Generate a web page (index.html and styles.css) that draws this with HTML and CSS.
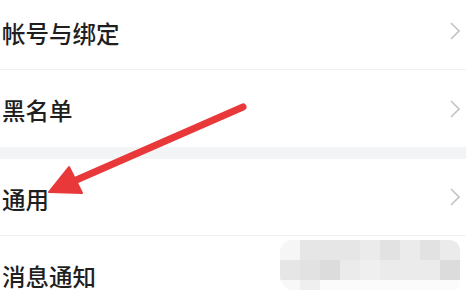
FILE: index.html
```html
<!DOCTYPE html>
<html lang="zh-CN">
<head>
    <meta charset="UTF-8">
    <meta name="viewport" content="width=device-width, initial-scale=1.0">
    <title>设置</title>
    <link rel="stylesheet" href="styles.css">
</head>
<body>
    <div class="settings">
        <div class="group">
            <div class="item item-first">
                <span class="label">帐号与绑定</span>
                <svg class="chevron" viewBox="0 0 10 18"><path d="M1 1 L9 9 L1 17"/></svg>
            </div>
            <div class="item">
                <span class="label">黑名单</span>
                <svg class="chevron" viewBox="0 0 10 18"><path d="M1 1 L9 9 L1 17"/></svg>
            </div>
        </div>
        <div class="gap"></div>
        <div class="group">
            <div class="item">
                <span class="label">通用</span>
                <svg class="chevron" viewBox="0 0 10 18"><path d="M1 1 L9 9 L1 17"/></svg>
            </div>
            <div class="item">
                <span class="label">消息通知</span>
                <svg class="chevron" viewBox="0 0 10 18"><path d="M1 1 L9 9 L1 17"/></svg>
            </div>
        </div>
    </div>

    <!-- red pointer drawn over the list -->
    <svg class="pointer" viewBox="0 0 466 302">
        <line x1="243" y1="107" x2="74" y2="181" />
        <polygon points="49,192 69,167 82,193" />
    </svg>

    <!-- pixelated patch -->
    <div class="mosaic">
        <div class="cell c1"></div><div class="cell c3"></div><div class="cell c3"></div><div class="cell c3"></div><div class="cell c5"></div><div class="cell c2"></div><div class="cell c5"></div><div class="cell c2"></div><div class="cell c5"></div>
        <div class="cell c3"></div><div class="cell c2"></div><div class="cell c4"></div><div class="cell c5"></div><div class="cell c6"></div><div class="cell c5"></div><div class="cell c5"></div><div class="cell c5"></div><div class="cell c4"></div>
        <div class="cell c7 half"></div><div class="cell c6 half"></div><div class="cell c8 half"></div><div class="cell c8 half"></div><div class="cell c8 half"></div><div class="cell c8 half"></div><div class="cell c8 half"></div><div class="cell c8 half"></div><div class="cell c8 half"></div>
    </div>
</body>
</html>
```

FILE: styles.css
```css
body {
    margin: 0;
    width: 466px;
    height: 302px;
    overflow: hidden;
    background: #fff;
    font-family: "Noto Sans CJK SC", "Noto Sans", sans-serif;
    position: relative;
}
.settings {
    margin-top: -7px;
}
.item {
    height: 76px;
    display: flex;
    align-items: center;
    justify-content: space-between;
    padding: 0 6px 0 2px;
    border-bottom: 1px solid #f0f0f0;
}
.group .item:last-child {
    border-bottom: none;
    height: 77px;
}
.label {
    font-size: 23.5px;
    font-weight: 500;
    color: #1f1f1f;
    padding-top: 3px;
}
.chevron {
    width: 10px;
    height: 18px;
}
.chevron path {
    fill: none;
    stroke: #c4c4c4;
    stroke-width: 1.6;
}
.gap {
    height: 12px;
    background: #f3f4f6;
}
.pointer {
    position: absolute;
    top: 0;
    left: 0;
    width: 466px;
    height: 302px;
    pointer-events: none;
}
.pointer line {
    stroke: #e8383a;
    stroke-width: 7;
    stroke-linecap: round;
}
.pointer polygon {
    fill: #e8383a;
    stroke: #e8383a;
    stroke-width: 2;
    stroke-linejoin: round;
}
.mosaic {
    position: absolute;
    left: 280px;
    top: 240px;
    width: 180px;
    display: grid;
    grid-template-columns: repeat(9, 20px);
    border-radius: 12px 10px 8px 14px;
    overflow: hidden;
}
.cell {
    height: 20px;
}
.cell.half {
    height: 10px;
}
.c1 { background: #f6f6f6; }
.c2 { background: #e2e2e2; }
.c3 { background: #e6e6e6; }
.c4 { background: #dcdcdc; }
.c5 { background: #ebebeb; }
.c6 { background: #efefef; }
.c7 { background: #f8f8f8; }
.c8 { background: #fbfbfb; }
```
